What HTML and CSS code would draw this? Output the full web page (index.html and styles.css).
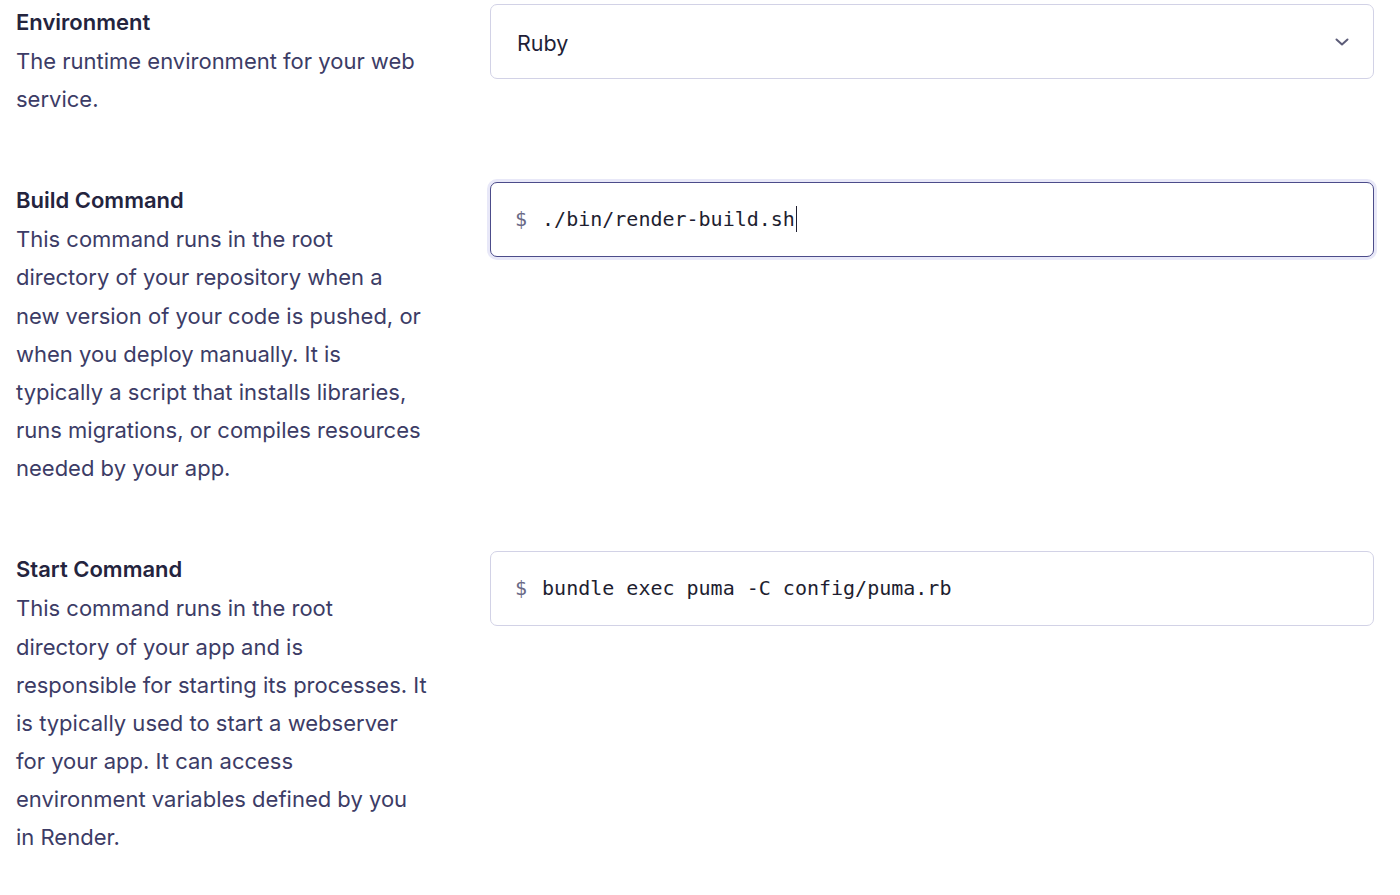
FILE: index.html
```html
<!DOCTYPE html>
<html lang="en">
<head>
<meta charset="utf-8">
<title>Service settings</title>
<link rel="stylesheet" href="styles.css">
</head>
<body>
<main class="form">
  <section class="row">
    <div class="info">
      <h3 class="label">Environment</h3>
      <p class="desc">The runtime environment for your web service.</p>
    </div>
    <div class="field select">
      <span class="value">Ruby</span>
      <svg class="chev" width="18" height="18" viewBox="0 0 18 18" aria-hidden="true"><path d="M3.5 6.5 L9 11.5 L14.5 6.5" fill="none" stroke="#5c5c78" stroke-width="2" stroke-linecap="round" stroke-linejoin="round"/></svg>
    </div>
  </section>

  <section class="row">
    <div class="info">
      <h3 class="label">Build Command</h3>
      <p class="desc">This command runs in the root directory of your repository when a new version of your code is pushed, or when you deploy manually. It is typically a script that installs libraries, runs migrations, or compiles resources needed by your app.</p>
    </div>
    <div class="field cmd focused">
      <span class="prompt">$</span><span class="code">./bin/render-build.sh</span><span class="caret"></span>
    </div>
  </section>

  <section class="row">
    <div class="info">
      <h3 class="label">Start Command</h3>
      <p class="desc">This command runs in the root directory of your app and is responsible for starting its processes. It is typically used to start a webserver for your app. It can access environment variables defined by you in Render.</p>
    </div>
    <div class="field cmd">
      <span class="prompt">$</span><span class="code">bundle exec puma -C config/puma.rb</span>
    </div>
  </section>
</main>
</body>
</html>
```
FILE: styles.css
```css
* { box-sizing: border-box; }
html, body { margin: 0; padding: 0; background: #ffffff; }
body {
  font-family: Inter, "Noto Sans", sans-serif;
  color: #3a3a62;
}
.form {
  display: flex;
  flex-direction: column;
  gap: 63px;
  padding: 3px 26px 0 16px;
}
.row {
  display: grid;
  grid-template-columns: 412px 1fr;
  column-gap: 62px;
  align-items: start;
}
.label {
  margin: 0;
  font-size: 22px;
  line-height: 39px;
  font-weight: 600;
  color: #24243e;
}
.desc {
  margin: 0;
  font-size: 22px;
  line-height: 38.15px;
  color: #3c3c66;
}
.field {
  height: 75px;
  margin-top: 1px;
  border: 1px solid #d2d2e6;
  border-radius: 7px;
  display: flex;
  align-items: center;
  padding: 0 26px;
  background: #fff;
}
.select { justify-content: space-between; padding-right: 22px; }
.select .value { font-size: 21.5px; color: #1f1f38; margin-top: 3px; }
.cmd {
  font-family: "DejaVu Sans Mono", monospace;
  font-size: 20px;
  padding: 0 24px 2px;
}
.prompt { color: #6a6a86; margin-right: 15px; }
.code { color: #1e1e30; white-space: pre; }
.focused {
  border-color: #4c4c8a;
  box-shadow: 0 0 0 3px #e8e8f8;
}
.caret {
  display: inline-block;
  width: 1px;
  height: 26px;
  background: #1e1e30;
  margin-left: 1px;
}
```
